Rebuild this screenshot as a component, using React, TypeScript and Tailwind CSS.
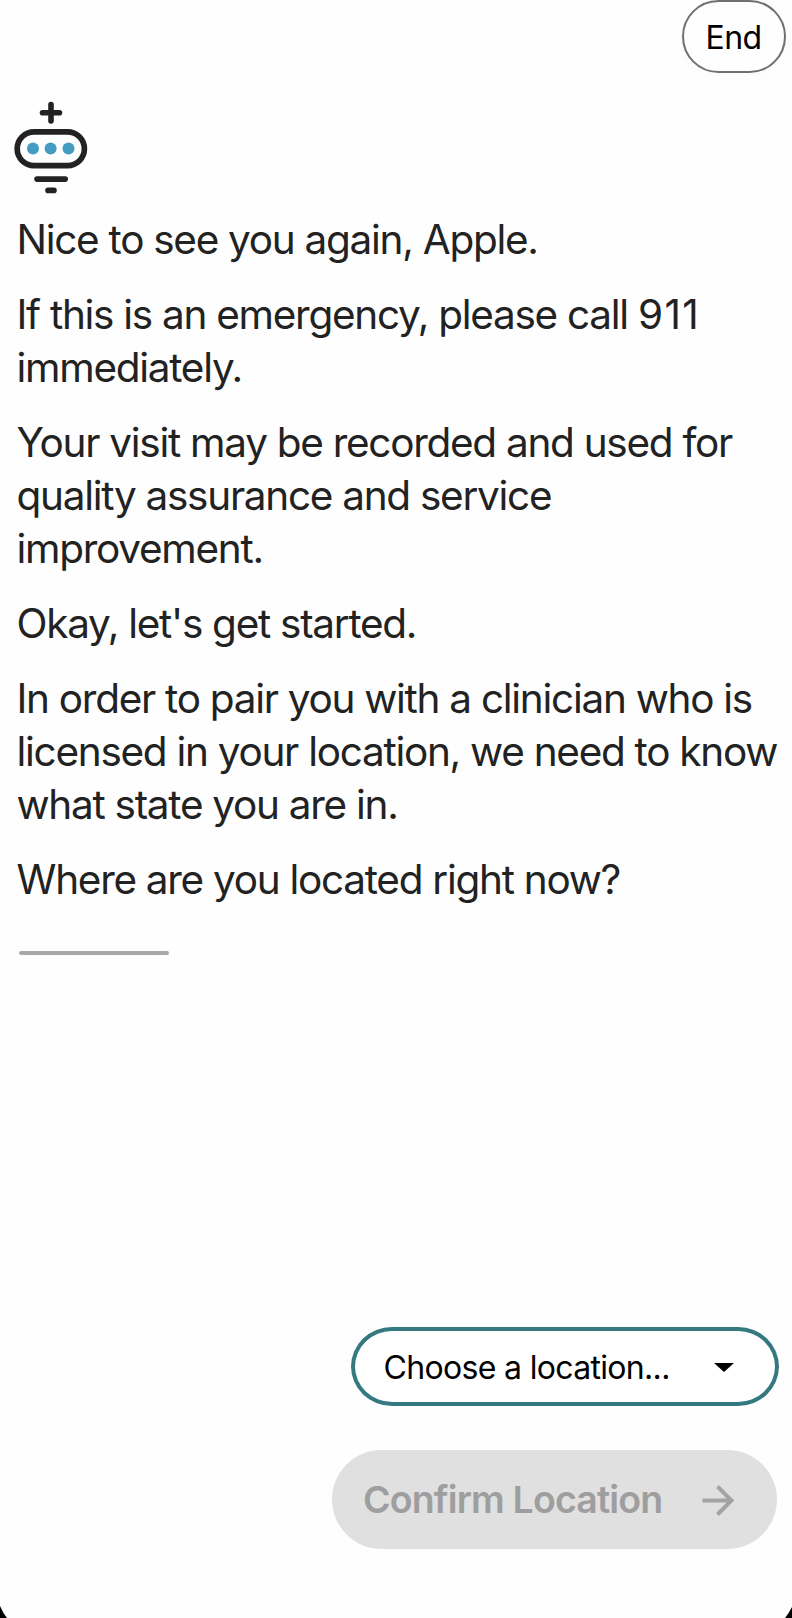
import React from 'react';

type MessageProps = {
  lines: string[];
};

const messages = [
  ['Nice to see you again, Apple.'],
  ['If this is an emergency, please call 911', 'immediately.'],
  ['Your visit may be recorded and used for', 'quality assurance and service', 'improvement.'],
  ["Okay, let's get started."],
  ['In order to pair you with a clinician who is', 'licensed in your location, we need to know', 'what state you are in.'],
  ['Where are you located right now?'],
];

const BotLogo = () => (
  <svg className="block h-[100px] w-[80px]" viewBox="0 0 80 100" fill="none" aria-hidden="true">
    <g stroke="#222" strokeLinecap="round">
      <path d="M39 6.500v16.500M30.500 14.700h17" strokeWidth="5.600" />
      <rect x="5.200" y="33.900" width="67.200" height="33.800" rx="16.900" strokeWidth="5.700" />
      <path d="M25 81.100h28.200M36 92.400h6" strokeWidth="5.600" />
    </g>
    <g fill="#459cc2">
      <circle cx="21" cy="50.500" r="6" />
      <circle cx="38.600" cy="50.500" r="6" />
      <circle cx="56.500" cy="50.500" r="6" />
    </g>
  </svg>
);

// Digits get looser tracking than the words around them
const Message = ({ lines }: MessageProps) => (
  <p>
    {lines.map((line) => (
      <span key={line} className="block whitespace-nowrap">
        {line.split(/(\d+)/).map((part, index) =>
          /^\d+$/.test(part) ? (
            <span key={index} className="tracking-[0.035em]">
              {part}
            </span>
          ) : (
            part
          )
        )}
      </span>
    ))}
  </p>
);

const App = () => {
  return (
    <div className="relative flex h-[1618px] w-[792px] flex-col overflow-hidden bg-[#fefefe] font-['Inter',sans-serif]">
      <header className="flex justify-end pr-[6.500px]">
        <button className="flex h-[73px] w-[104px] items-center justify-center rounded-[37px] border-2 border-[#707070] pt-[2px] text-[32px] tracking-[-0.02em] text-black shadow-[0_2px_16px_rgba(0,0,0,0.02)]">
          End
        </button>
      </header>

      <main className="flex flex-col pt-[25px] pl-[12px]">
        <BotLogo />
        <div className="mt-[15px] ml-[4.500px] flex flex-col gap-[21.330px] text-[40.500px] leading-[53.330px] tracking-[-0.0316em] text-[#222]">
          {messages.map((lines) => (
            <Message key={lines[0]} lines={lines} />
          ))}
        </div>
        <div className="mt-[45px] ml-[7px] h-[4px] w-[150px] rounded-full bg-[#a8a8a8]" />
      </main>

      <footer className="mt-auto flex flex-col items-end pb-[69px]">
        <button className="mr-[13.500px] flex h-[79px] w-[428px] items-center justify-between rounded-[41px/39.5px] border-4 border-[#33797f] bg-white pt-[2px] pr-[41px] pl-[29px] text-[32px] tracking-[-0.021em] text-black">
          <span className="whitespace-nowrap">Choose a location...</span>
          <svg className="h-[9px] w-[20px]" viewBox="0 0 20 9" aria-hidden="true">
            <path d="M0 0h20l-10 9z" fill="#000" />
          </svg>
        </button>
        <button
          disabled
          className="mt-[44px] mr-[15px] flex h-[99px] w-[445px] items-center justify-between rounded-full bg-[#e0e0e0] pt-px pr-[43px] pl-[31px] text-[37.500px] font-semibold tracking-[-0.023em] text-[#9e9e9e]"
        >
          <span className="whitespace-nowrap">Confirm Location</span>
          <svg className="h-[31px] w-[32px]" viewBox="0 0 32 31" fill="none" aria-hidden="true">
            <path d="M0.500 15.500h28.500M15.500 1.500l14 14-14 14" stroke="#a3a3a3" strokeWidth="4" />
          </svg>
        </button>
      </footer>

      <svg className="absolute bottom-0 left-0 h-[12px] w-[7px]" viewBox="0 0 7 12" aria-hidden="true">
        <path d="M0 0Q3 7 7 12H0z" fill="#000" />
      </svg>
      <svg className="absolute right-0 bottom-0 h-[12px] w-[7px]" viewBox="0 0 7 12" aria-hidden="true">
        <path d="M7 1Q4 7 0 12H7z" fill="#000" />
      </svg>
    </div>
  );
};

export default App;
